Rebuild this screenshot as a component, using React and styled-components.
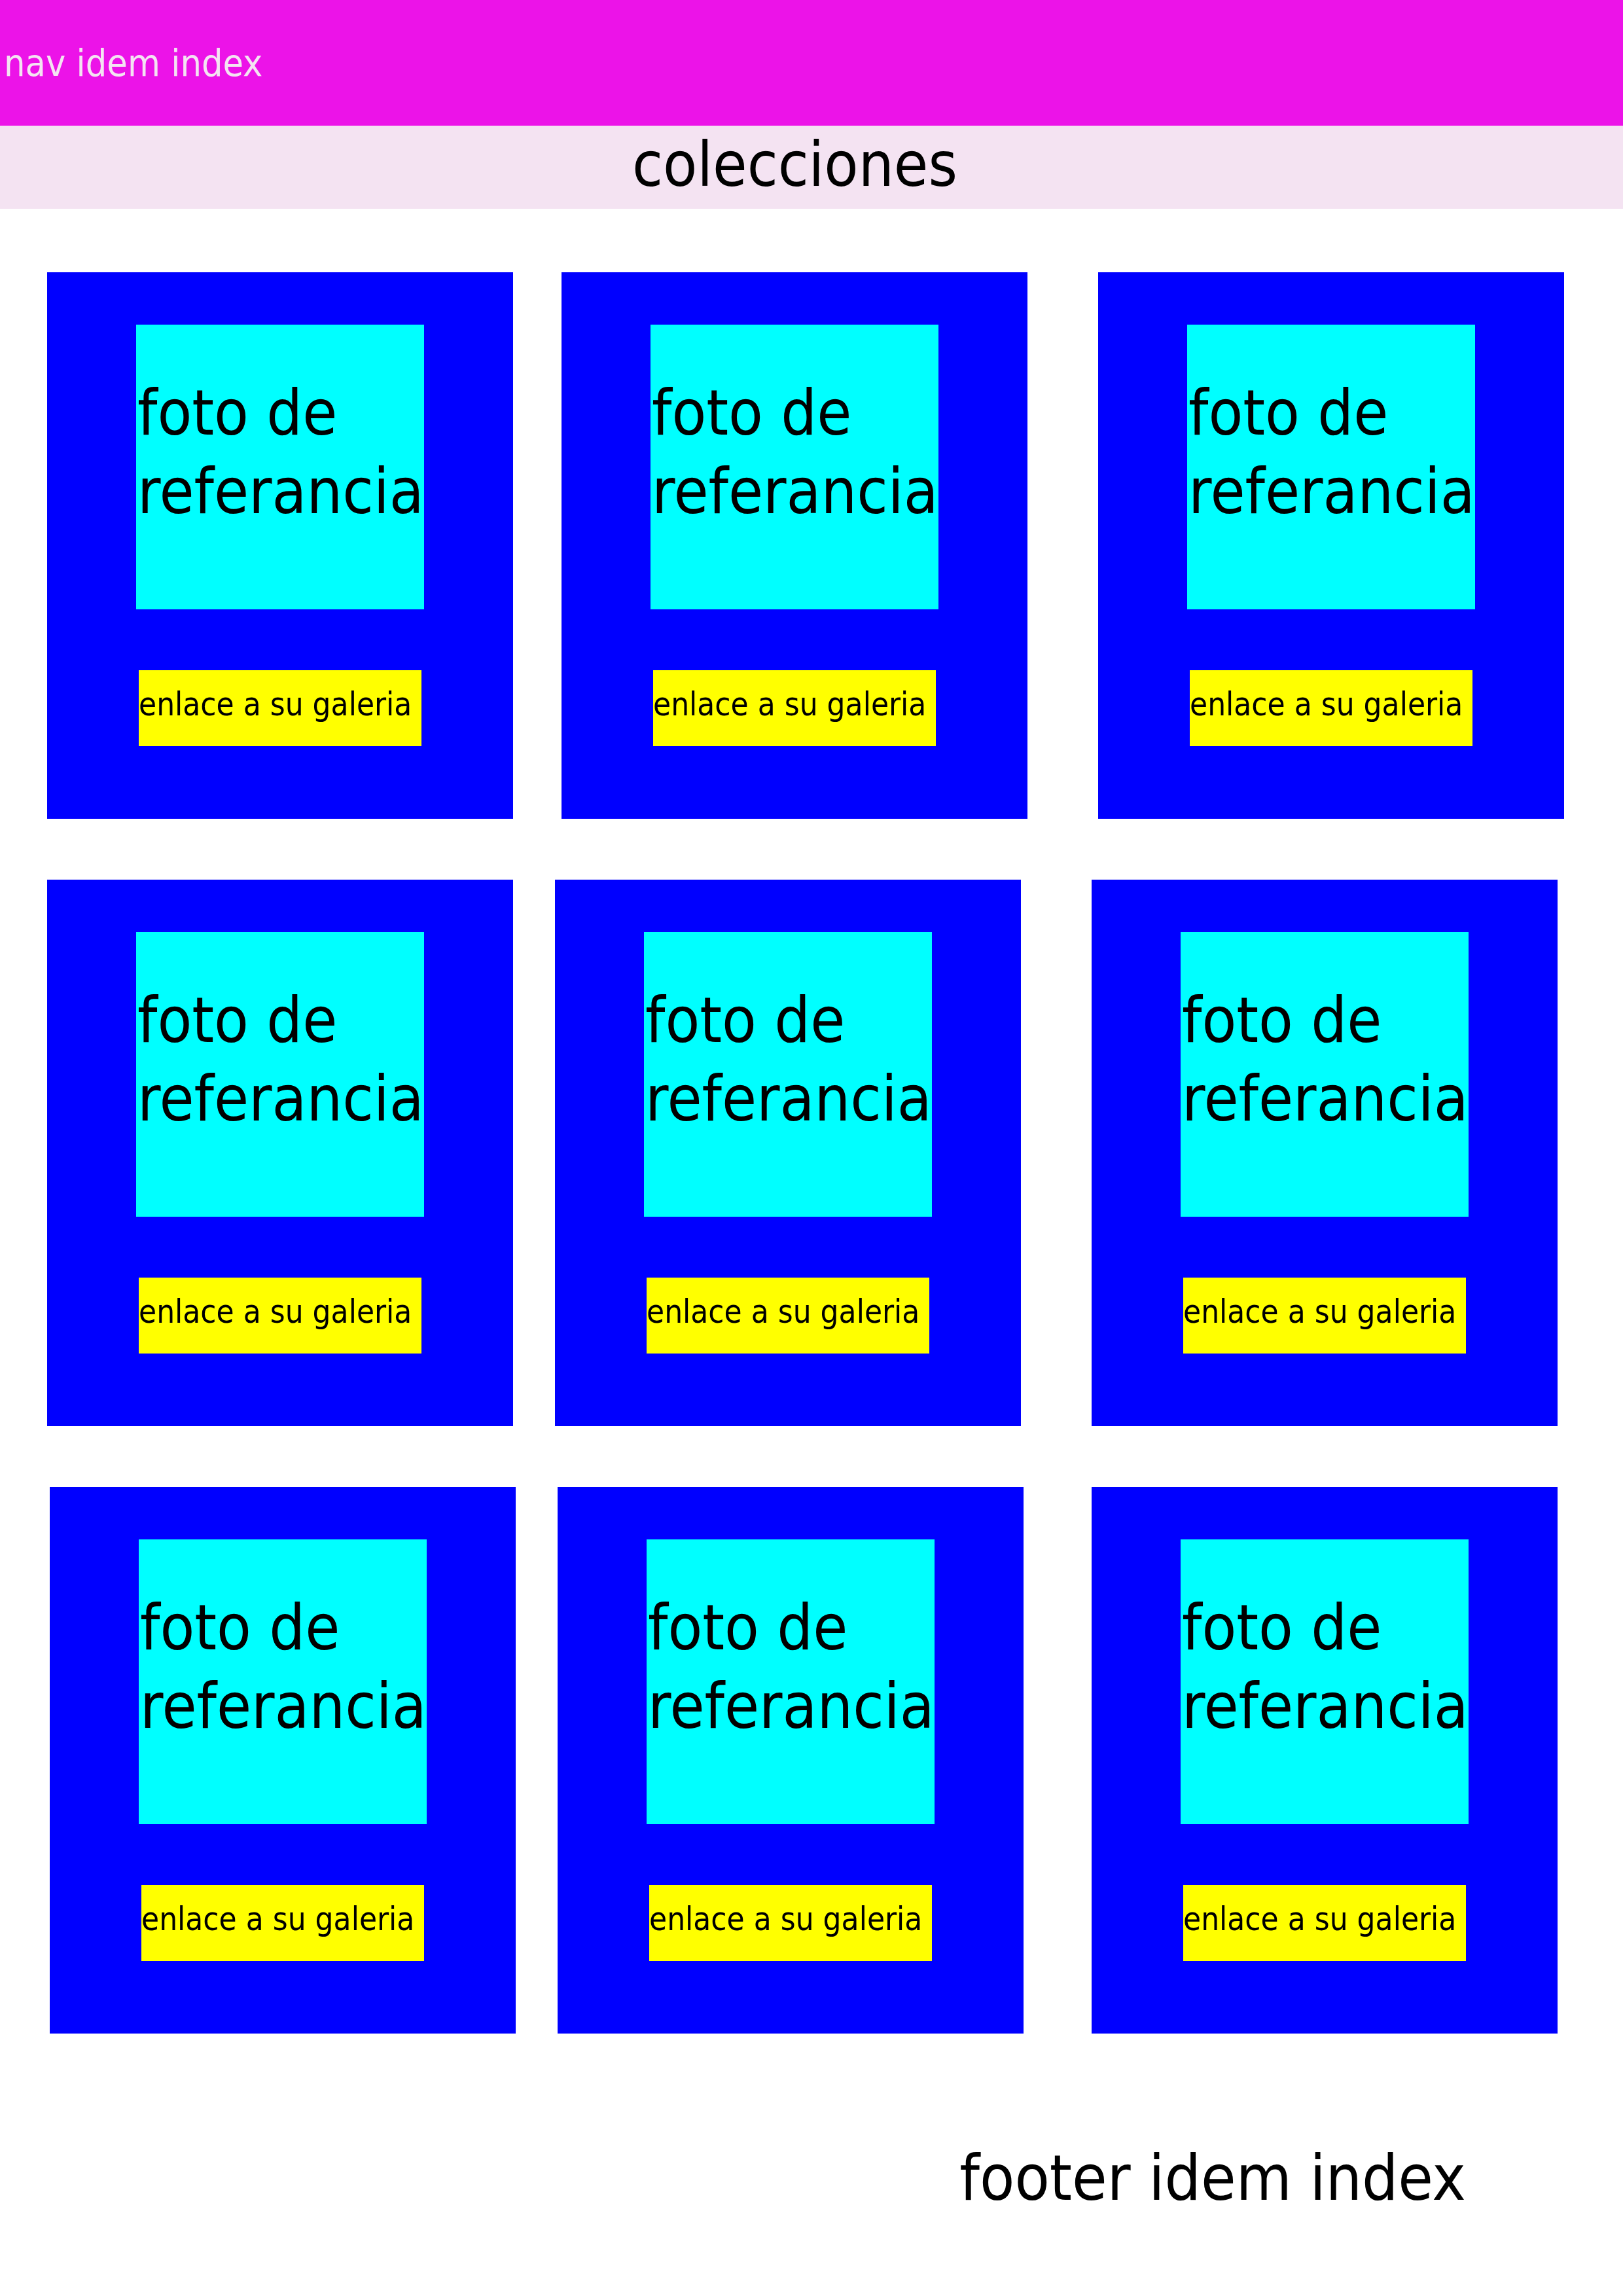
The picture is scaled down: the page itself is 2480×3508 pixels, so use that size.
import React from 'react';
import styled, { createGlobalStyle } from 'styled-components';

const GlobalStyle = createGlobalStyle`
  html, body {
    margin: 0;
    padding: 0;
    background: #ffffff;
  }
  body {
    font-family: "DejaVu Sans Condensed", "DejaVu Sans", "Liberation Sans", sans-serif;
    font-stretch: condensed;
    color: #000000;
  }
`;

const Page = styled.div`
  width: 2480px;
  min-height: 3508px;
  display: flex;
  flex-direction: column;
`;

const Nav = styled.nav`
  height: 192px;
  display: flex;
  align-items: center;
  padding-left: 6px;
  background: #ec13e8;
  color: #f4e3f2;
  font-size: 57px;
  line-height: 70px;
`;

const TitleBar = styled.header`
  height: 127px;
  box-sizing: border-box;
  padding: 0 51px 9px 0;
  background: #f4e3f2;
  text-align: center;
  font-size: 95px;
  line-height: 118px;
  overflow: hidden;
`;

const Grid = styled.main`
  display: flex;
  flex-direction: column;
  gap: 93px;
  padding-top: 97px;
`;

const Row = styled.div`
  display: flex;
`;

const Card = styled.section`
  width: 712px;
  height: 835px;
  margin-left: ${(p) => p.$ml}px;
  box-sizing: border-box;
  padding-top: 80px;
  background: #0000ff;
  display: flex;
  flex-direction: column;
  align-items: center;
`;

const Photo = styled.div`
  width: 440px;
  height: 435px;
  box-sizing: border-box;
  padding: 75px 0 0 2px;
  background: #00ffff;
  font-size: 96px;
  line-height: 120px;
  white-space: nowrap;
  overflow: hidden;
`;

const GalleryLink = styled.a`
  display: block;
  width: 432px;
  height: 116px;
  box-sizing: border-box;
  margin-top: 93px;
  padding-top: 24px;
  background: #ffff00;
  color: #000000;
  text-decoration: none;
  font-size: 49px;
  line-height: 58px;
  white-space: nowrap;
`;

const Footer = styled.footer`
  margin-top: 163px;
  padding-right: 240px;
  text-align: right;
  font-size: 97px;
  line-height: 116px;
`;

// left offsets of the cards, row by row, as in the mockup
const rows = [
  [72, 74, 108],
  [72, 64, 108],
  [76, 64, 104],
];

const App = () => (
  <>
    <GlobalStyle />
    <Page>
      <Nav>nav idem index</Nav>
      <TitleBar>colecciones</TitleBar>
      <Grid>
        {rows.map((offsets, r) => (
          <Row key={r}>
            {offsets.map((ml, c) => (
              <Card key={c} $ml={ml}>
                <Photo>
                  foto de
                  <br />
                  referancia
                </Photo>
                <GalleryLink href="#">enlace a su galeria</GalleryLink>
              </Card>
            ))}
          </Row>
        ))}
      </Grid>
      <Footer>footer idem index</Footer>
    </Page>
  </>
);

export default App;
